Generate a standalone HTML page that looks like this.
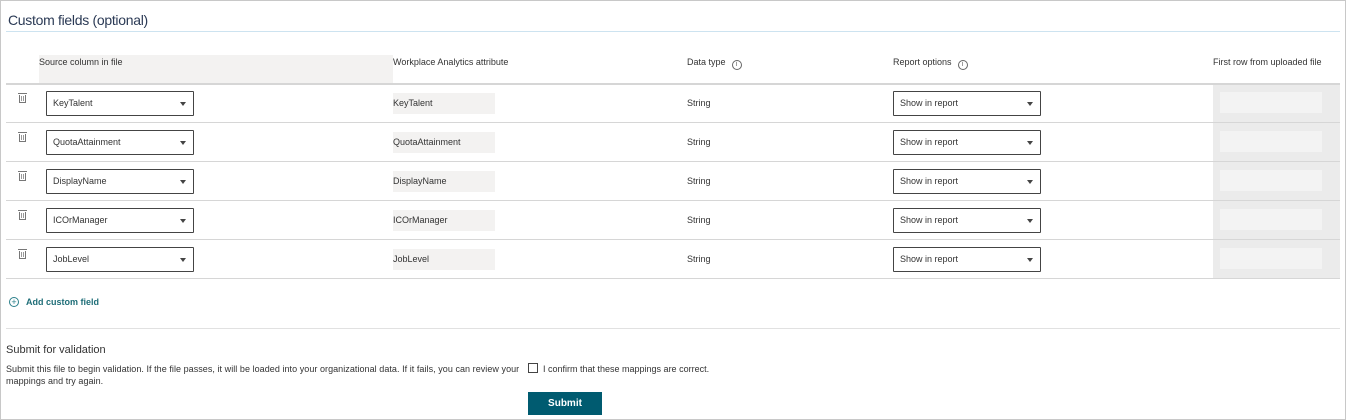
<!DOCTYPE html>
<html><head><style>
*{box-sizing:border-box;margin:0;padding:0}
body{width:1346px;height:420px;background:#fff;font-family:"Liberation Sans",sans-serif;color:#333;position:relative;overflow:hidden}
.a{position:absolute}
.frame{left:0;top:0;width:1346px;height:420px;border:1px solid #c8c8c8}
.t9{font-size:9px;color:#333}
.dd{position:absolute;width:148px;height:25px;border:1px solid #444;border-radius:1px;background:#fff;font-size:9px;padding:0 6px;line-height:23px}
.dd:after{content:"";position:absolute;right:7px;top:10px;border-left:3.5px solid transparent;border-right:3.5px solid transparent;border-top:4px solid #444}
.attr{position:absolute;left:393px;width:102px;height:21px;background:#f3f2f1;font-size:9px;line-height:21px}
.line{position:absolute;left:6px;width:1334px;height:1px;background:#d6d6d6}
.info{display:inline-block;width:10px;height:10px;border:1px solid #666;border-radius:50%;font-size:7px;line-height:8px;text-align:center;margin-left:6px;vertical-align:-1px;color:#666}
.tr{position:absolute;left:19px;width:7px;height:8px;border:1px solid #777;border-top:none;background:#fff}
.tr:before{content:"";position:absolute;left:-2px;top:-2px;width:9px;height:1px;background:#777}
.tr:after{content:"";position:absolute;left:1px;top:1px;width:1px;height:5px;background:#999;box-shadow:2px 0 #999}
</style></head><body>
<div class="a frame"></div>
<div class="a" style="left:8px;top:12px;font-size:14px;color:#2b3a55;letter-spacing:-0.3px">Custom fields (optional)</div>
<div class="a" style="left:6px;top:31px;width:1334px;height:1px;background:#cde3f0"></div>
<div class="a" style="left:39px;top:55px;width:354px;height:28px;background:#f3f2f1"></div>
<div class="a t9" style="left:39px;top:57px">Source column in file</div>
<div class="a t9" style="left:393px;top:57px">Workplace Analytics attribute</div>
<div class="a t9" style="left:687px;top:57px">Data type<span class="info">i</span></div>
<div class="a t9" style="left:893px;top:57px">Report options<span class="info">i</span></div>
<div class="a t9" style="left:1213px;top:57px">First row from uploaded file</div>
<div class="a" style="left:1213px;top:84px;width:127px;height:194px;background:#ebebeb"></div>
<div class="line" style="top:83px;height:2px"></div>
<div class="line" style="top:122px"></div>
<div class="line" style="top:161px"></div>
<div class="line" style="top:200px"></div>
<div class="line" style="top:239px"></div>
<div class="line" style="top:278px"></div>

<div class="tr" style="top:95px"></div>
<div class="tr" style="top:134px"></div>
<div class="tr" style="top:173px"></div>
<div class="tr" style="top:212px"></div>
<div class="tr" style="top:251px"></div>

<div class="dd" style="left:46px;top:91px">KeyTalent</div>
<div class="attr" style="top:93px">KeyTalent</div>
<div class="a t9" style="left:687px;top:98px">String</div>
<div class="dd" style="left:893px;top:91px">Show in report</div>
<div class="a" style="left:1220px;top:92px;width:102px;height:21px;background:#f3f3f3"></div>

<div class="dd" style="left:46px;top:130px">QuotaAttainment</div>
<div class="attr" style="top:132px">QuotaAttainment</div>
<div class="a t9" style="left:687px;top:137px">String</div>
<div class="dd" style="left:893px;top:130px">Show in report</div>
<div class="a" style="left:1220px;top:131px;width:102px;height:21px;background:#f3f3f3"></div>

<div class="dd" style="left:46px;top:169px">DisplayName</div>
<div class="attr" style="top:171px">DisplayName</div>
<div class="a t9" style="left:687px;top:176px">String</div>
<div class="dd" style="left:893px;top:169px">Show in report</div>
<div class="a" style="left:1220px;top:170px;width:102px;height:21px;background:#f3f3f3"></div>

<div class="dd" style="left:46px;top:208px">ICOrManager</div>
<div class="attr" style="top:210px">ICOrManager</div>
<div class="a t9" style="left:687px;top:215px">String</div>
<div class="dd" style="left:893px;top:208px">Show in report</div>
<div class="a" style="left:1220px;top:209px;width:102px;height:21px;background:#f3f3f3"></div>

<div class="dd" style="left:46px;top:247px">JobLevel</div>
<div class="attr" style="top:249px">JobLevel</div>
<div class="a t9" style="left:687px;top:254px">String</div>
<div class="dd" style="left:893px;top:247px">Show in report</div>
<div class="a" style="left:1220px;top:248px;width:102px;height:21px;background:#f3f3f3"></div>

<div class="a" style="left:9px;top:297px;width:10px;height:10px;border:1px solid #2a7f8a;border-radius:50%;font-size:9px;line-height:8px;text-align:center;color:#2a7f8a">+</div>
<div class="a" style="left:26px;top:297px;font-size:9px;color:#1f6e78;font-weight:bold">Add custom field</div>

<div class="a" style="left:6px;top:328px;width:1334px;height:1px;background:#e1e1e1"></div>
<div class="a" style="left:6px;top:344px;font-size:11px;color:#333">Submit for validation</div>
<div class="a" style="left:6px;top:363px;font-size:9px;color:#333;line-height:12px;white-space:nowrap;letter-spacing:0.05px">Submit this file to begin validation. If the file passes, it will be loaded into your organizational data. If it fails, you can review your<br>mappings and try again.</div>
<div class="a" style="left:528px;top:363px;width:10px;height:10px;border:1px solid #444;background:#fff"></div>
<div class="a" style="left:543px;top:363px;font-size:9px;line-height:12px">I confirm that these mappings are correct.</div>
<div class="a" style="left:528px;top:392px;width:74px;height:23px;background:#005b70;color:#fff;font-size:10px;font-weight:bold;text-align:center;line-height:23px">Submit</div>
</body></html>
